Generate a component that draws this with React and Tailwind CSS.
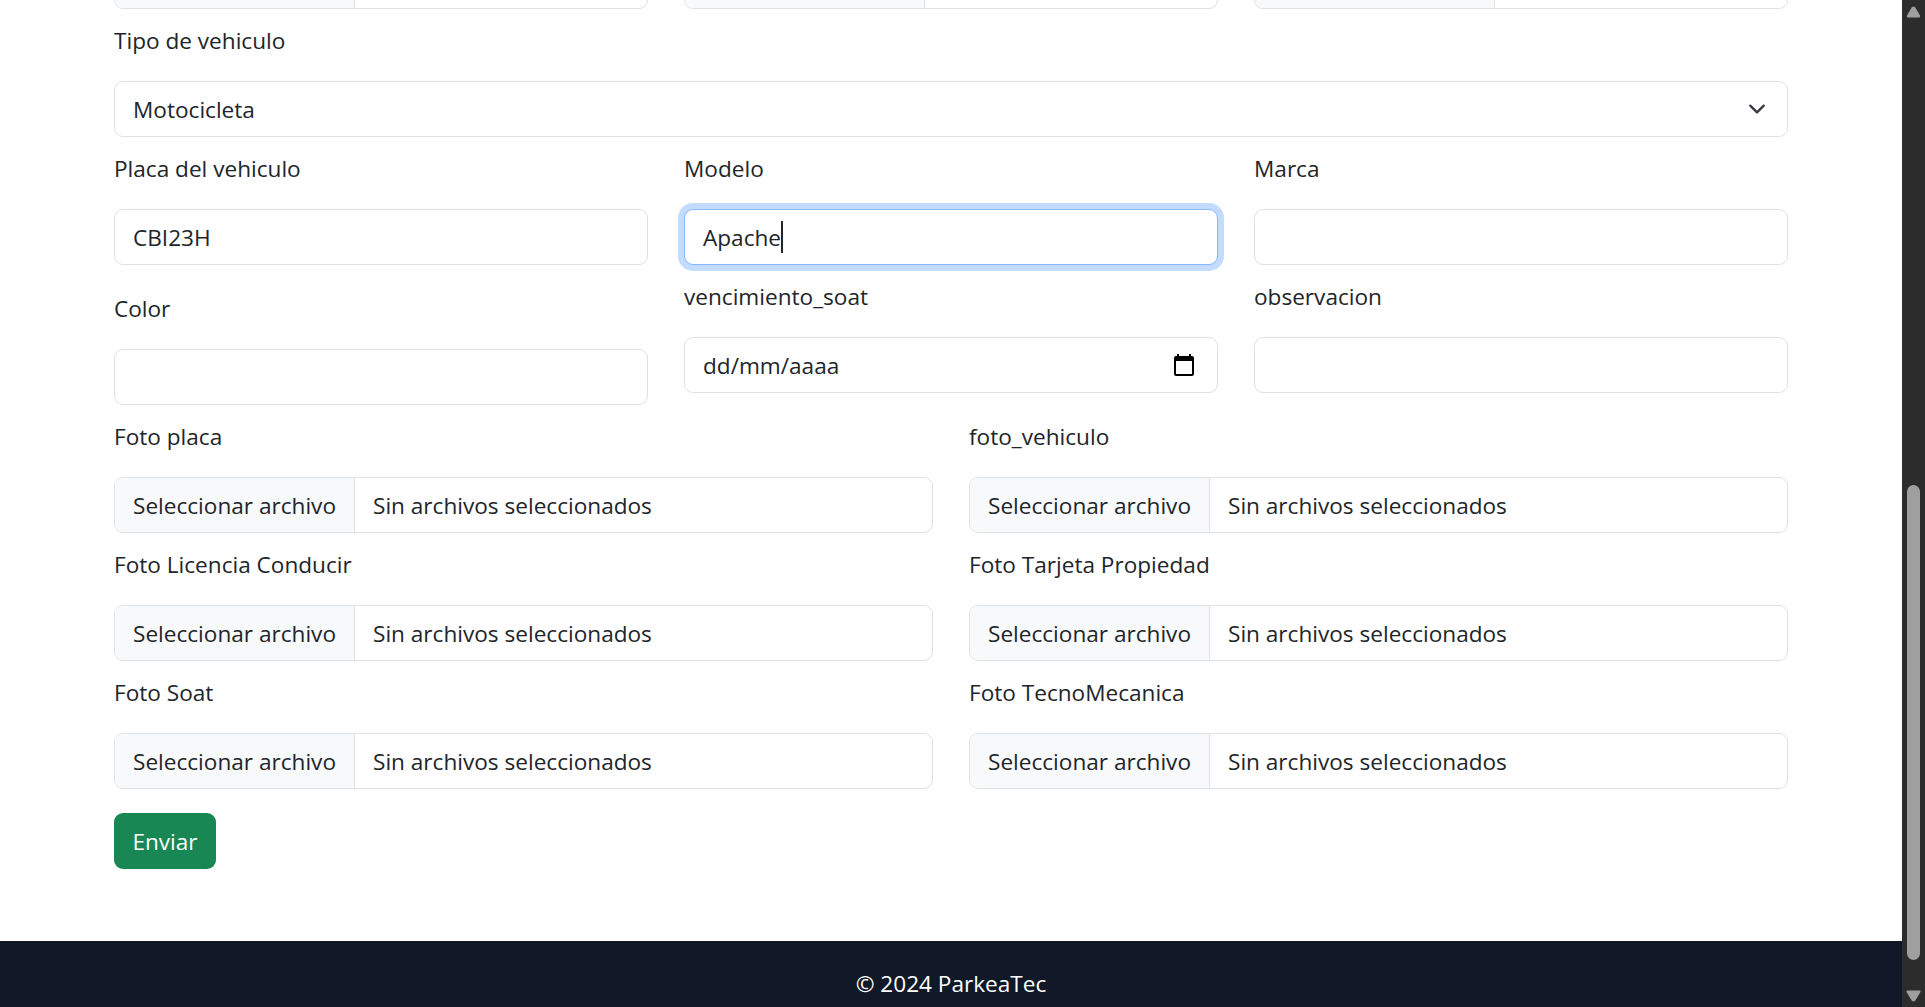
const inputBox = 'h-14 rounded-[9px] border border-[#dee2e6] bg-white';

// File picker, drawn the way the browser shows it
function FileInput({ empty = false }) {
  return (
    <div className={`${inputBox} flex items-stretch overflow-hidden`}>
      <div className="flex items-center bg-[#f8f9fa] border-r border-[#dee2e6] pt-[2px] px-[18px] w-[240px] whitespace-nowrap">
        {!empty && 'Seleccionar archivo'}
      </div>
      <div className="flex items-center pt-[2px] px-[18px] whitespace-nowrap">
        {!empty && 'Sin archivos seleccionados'}
      </div>
    </div>
  );
}

function Label({ children }) {
  return <div className="h-[72px] pt-[14px] leading-9 whitespace-nowrap">{children}</div>;
}

function TextField({ label, value, className = '' }) {
  return (
    <div className={className}>
      <Label>{label}</Label>
      <div className={`${inputBox} flex items-center pt-[2px] px-[18px]`}>{value}</div>
    </div>
  );
}

function FileField({ label }) {
  return (
    <div>
      <Label>{label}</Label>
      <FileInput />
    </div>
  );
}

function Scrollbar() {
  return (
    <div className="w-[23px] shrink-0 bg-[#2c2c2c] flex flex-col items-center">
      <svg className="mt-[6px] w-[15px] h-3" viewBox="0 0 15 12">
        <path d="M5.8 1.2 Q7.5 -0.4 9.2 1.2 L14 9.5 Q14.6 11.5 13 11.5 L2 11.5 Q0.4 11.5 1 9.5 Z" fill="#9f9f9f" />
      </svg>
      <div className="mt-[467px] w-[13px] h-[475px] rounded-full bg-[#9f9f9f]" />
      <svg className="mt-[30px] w-[15px] h-3" viewBox="0 0 15 12">
        <path d="M5.8 10.8 Q7.5 12.4 9.2 10.8 L14.5 2 Q15 0.5 13.5 0.5 L1.5 0.5 Q0 0.5 0.5 2 Z" fill="#9f9f9f" />
      </svg>
    </div>
  );
}

export default function App() {
  return (
    <div className="h-[1007px] flex overflow-hidden bg-white text-[#212529] text-[22.6px] font-['Open_Sans','Noto_Sans',sans-serif]">
      <div className="flex-1 min-w-0 flex flex-col">
        <main className="px-[114px] pb-[72px] -mt-[47px]">
          <div className="grid grid-cols-3 gap-x-9">
            <FileInput empty />
            <FileInput empty />
            <FileInput empty />
          </div>

          <div>
            <Label>Tipo de vehiculo</Label>
            <div className={`${inputBox} flex items-center justify-between pl-[18px] pr-[21px]`}>
              <span className="pt-[2px]">Motocicleta</span>
              <svg className="w-[18px] h-[18px]" viewBox="0 0 16 16" fill="none">
                <path d="m2 5 6 6 6-6" stroke="#343a40" strokeWidth="2" strokeLinecap="round" strokeLinejoin="round" />
              </svg>
            </div>
          </div>

          <div className="grid grid-cols-3 gap-x-9 items-start">
            <div>
              <TextField label="Placa del vehiculo" value="CBI23H" className="mb-3" />
              <TextField label="Color" />
            </div>
            <div>
              <div>
                <Label>Modelo</Label>
                <div className="h-14 rounded-[9px] border border-[#86b7fe] bg-white shadow-[0_0_0_6px_#c2dbfe] flex items-center px-[18px]">
                  <span className="pt-[2px]">Apache</span>
                  <span className="w-[2px] h-8 bg-[#212529]" />
                </div>
              </div>
              <div>
                <Label>vencimiento_soat</Label>
                <div className={`${inputBox} flex items-center justify-between pl-[18px] pr-[21px]`}>
                  <span className="pt-[2px]">dd/mm/aaaa</span>
                  <svg className="w-6 h-6" viewBox="0 0 24 24" fill="#000">
                    <path d="M20 3h-1V1h-2v2H7V1H5v2H4c-1.1 0-2 .9-2 2v16c0 1.1.9 2 2 2h16c1.1 0 2-.9 2-2V5c0-1.1-.9-2-2-2zm0 18H4V8h16v13z" />
                  </svg>
                </div>
              </div>
            </div>
            <div>
              <TextField label="Marca" />
              <TextField label="observacion" />
            </div>
          </div>

          <div className="grid grid-cols-2 gap-x-9">
            <FileField label="Foto placa" />
            <FileField label="foto_vehiculo" />
            <FileField label="Foto Licencia Conducir" />
            <FileField label="Foto Tarjeta Propiedad" />
            <FileField label="Foto Soat" />
            <FileField label="Foto TecnoMecanica" />
          </div>

          <button className="mt-6 h-14 w-[102px] rounded-[9px] bg-[#198754] text-white pt-[2px]">Enviar</button>
        </main>

        <footer className="bg-[#111827] text-white text-center pt-[25px] pb-6 leading-9 shrink-0">© 2024 ParkeaTec</footer>
      </div>
      <Scrollbar />
    </div>
  );
}
